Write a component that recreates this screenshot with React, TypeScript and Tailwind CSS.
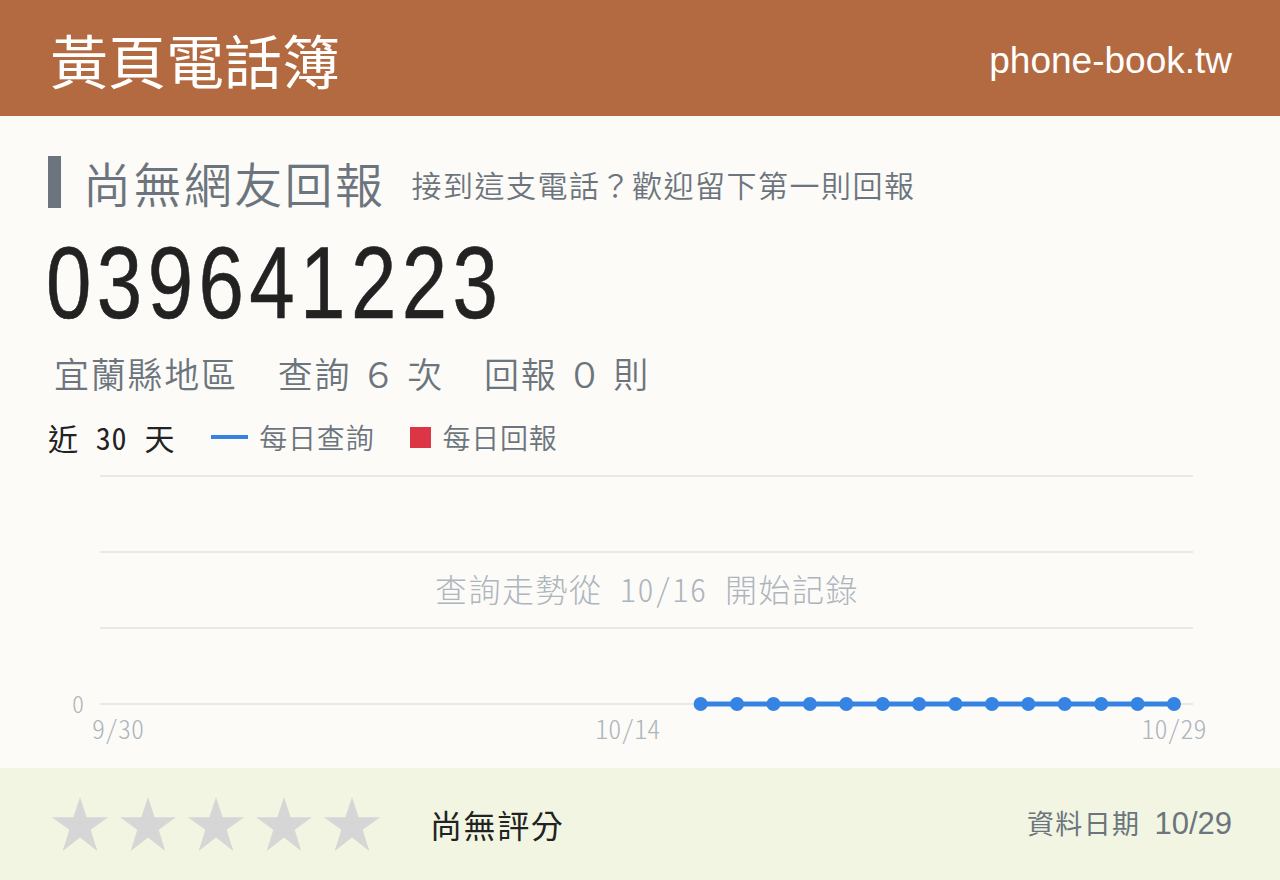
const cjk = "font-['Noto_Sans_CJK_TC',sans-serif]";
const hw = "[font-feature-settings:'hwid']";

// 30-day window 9/30 .. 10/29; queries recorded from 10/16 onward
const days = 30;
const recordedFrom = 16;
const plotLeft = 70;
const plotRight = 1126;
const step = (plotRight - plotLeft) / (days - 1);
const baseY = 242;

const gridY = [14, 90, 166, 242];

const points = Array.from({ length: days - recordedFrom }, (_, i) => plotLeft + (recordedFrom + i) * step);

const axisFont = { fontFamily: 'Noto Sans CJK TC, sans-serif', fontFeatureSettings: "'hwid'" };

function TrendChart() {
  return (
    <svg width="1184" height="290" viewBox="0 0 1184 290" className="block" style={axisFont}>
      {gridY.map((y) => (
        <line key={y} x1="52" x2="1145" y1={y} y2={y} stroke="#e6e8eb" strokeWidth="2" />
      ))}
      <g fill="#adb5bd" fontWeight="300" textAnchor="middle">
        <text x="30" y={baseY + 9} fontSize="24">0</text>
        <text x={plotLeft} y="277" fontSize="26">9/30</text>
        <text x={plotLeft + 14 * step} y="277" fontSize="26">10/14</text>
        <text x={plotRight} y="277" fontSize="26">10/29</text>
        <text x="599" y="140" fontSize="32" letterSpacing="1.5">
          查詢走勢從 10/16 開始記錄
        </text>
      </g>
      <polyline
        points={points.map((x) => `${x},${baseY}`).join(' ')}
        fill="none"
        stroke="#3584e4"
        strokeWidth="5"
      />
      {points.map((x) => (
        <circle key={x} cx={x} cy={baseY} r="7" fill="#3584e4" />
      ))}
    </svg>
  );
}

function Star() {
  return (
    <svg width="56" height="54" viewBox="0 0 56 54" className="block">
      <polygon
        fill="#d6d6d6"
        points="28,0 34.6,20.2 56,20.2 38.7,32.8 45.3,54 28,40.6 10.7,54 17.3,32.8 0,20.2 21.4,20.2"
      />
    </svg>
  );
}

export default function App() {
  return (
    <div className={`w-[1280px] h-[880px] flex flex-col bg-[#fcfbf8] ${cjk}`}>
      <header className="h-[116px] bg-[#b46a40] flex items-center justify-between pl-[50px] pr-12 shrink-0">
        <h1 className="text-[58px] text-white leading-none mt-[2px]">黃頁電話簿</h1>
        <span className="font-['Liberation_Sans',sans-serif] text-[37px] text-white mt-[6px]">phone-book.tw</span>
      </header>

      <main className="flex-1 pl-12 pr-12 pt-[40px]">
        <div className="flex items-center">
          <div className="w-[13px] h-[52px] bg-[#6c757d]" />
          <h2 className="ml-[22px] text-[48px] leading-none tracking-wider font-[350] text-[#6c757d]">尚無網友回報</h2>
          <p className="ml-[26px] mt-[4px] text-[30px] leading-none tracking-wider font-[350] text-[#6c757d]">
            接到這支電話？歡迎留下第一則回報
          </p>
        </div>

        {/* narrow digits: Liberation Sans squeezed horizontally */}
        <div className="mt-[24px] -ml-[2px] h-[102px]">
          <span className="inline-block origin-left scale-x-[0.8] font-['Liberation_Sans',sans-serif] text-[102px] leading-none tracking-[6.8px] text-[#222222] [-webkit-text-stroke:0.6px_#222222]">
            039641223
          </span>
        </div>

        <div className="mt-[21px] pl-[6px] text-[35px] leading-none tracking-wider font-[350] text-[#6c757d] flex">
          <span>宜蘭縣地區</span>
          <span className="ml-[40px] whitespace-pre">查詢 ６ 次</span>
          <span className="ml-[40px] whitespace-pre">回報 ０ 則</span>
        </div>

        <div className="mt-[32px] flex items-center leading-none tracking-wider">
          <span className="text-[30px] text-[#222222]">近</span>
          <span className={`mx-[17px] text-[30px] text-[#222222] ${hw}`}>30</span>
          <span className="text-[30px] text-[#222222]">天</span>
          <span className="ml-[36px] w-[37px] h-[4px] bg-[#3584e4]" />
          <span className="ml-[11px] text-[28px] font-[350] text-[#6c757d]">每日查詢</span>
          <span className="ml-[36px] w-[21px] h-[21px] bg-[#dc3545]" />
          <span className="ml-[11px] text-[28px] font-[350] text-[#6c757d]">每日回報</span>
        </div>

        <div className="mt-[10px]">
          <TrendChart />
        </div>
      </main>

      <footer className="h-[112px] shrink-0 bg-[#f1f5e2] flex items-center pl-[52px] pr-12">
        <div className="flex gap-[12px]">
          {[0, 1, 2, 3, 4].map((i) => (
            <Star key={i} />
          ))}
        </div>
        <span className="ml-[50px] text-[32px] tracking-wider text-[#222222]">尚無評分</span>
        <div className="ml-auto flex items-baseline gap-[14px] text-[#6c757d]">
          <span className="text-[27px] tracking-wider">資料日期</span>
          <span className="font-['Liberation_Sans',sans-serif] text-[31px]">10/29</span>
        </div>
      </footer>
    </div>
  );
}
